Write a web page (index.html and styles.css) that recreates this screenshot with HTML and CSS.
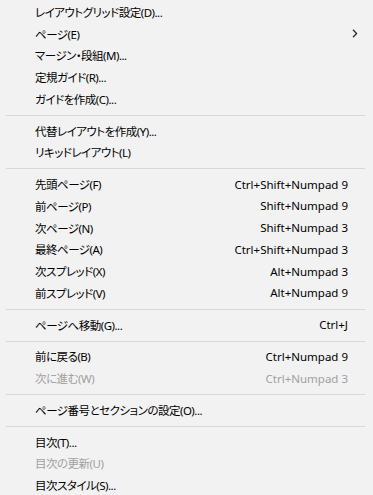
FILE: index.html
```html
<!DOCTYPE html>
<html lang="ja">
<head>
    <meta charset="UTF-8">
    <meta name="viewport" content="width=device-width, initial-scale=1.0">
    <title>レイアウトメニュー</title>
    <link rel="stylesheet" href="styles.css">
</head>
<body>
    <div class="menu">
        <div class="item"><span class="label">レイアウトグリッド設定(D)...</span></div>
        <div class="item"><span class="label">ページ(E)</span>
            <svg class="arrow" width="6" height="9" viewBox="0 0 6 9"><polyline points="1,0.8 4.6,4.5 1,8.2" fill="none" stroke="#2b2b2b" stroke-width="1.3"/></svg>
        </div>
        <div class="item"><span class="label">マージン・段組(M)...</span></div>
        <div class="item"><span class="label">定規ガイド(R)...</span></div>
        <div class="item"><span class="label">ガイドを作成(C)...</span></div>
        <div class="sep"></div>
        <div class="item"><span class="label">代替レイアウトを作成(Y)...</span></div>
        <div class="item"><span class="label">リキッドレイアウト(L)</span></div>
        <div class="sep"></div>
        <div class="item"><span class="label">先頭ページ(F)</span><span class="key">Ctrl+Shift+Numpad 9</span></div>
        <div class="item"><span class="label">前ページ(P)</span><span class="key">Shift+Numpad 9</span></div>
        <div class="item"><span class="label">次ページ(N)</span><span class="key">Shift+Numpad 3</span></div>
        <div class="item"><span class="label">最終ページ(A)</span><span class="key">Ctrl+Shift+Numpad 3</span></div>
        <div class="item"><span class="label">次スプレッド(X)</span><span class="key">Alt+Numpad 3</span></div>
        <div class="item"><span class="label">前スプレッド(V)</span><span class="key">Alt+Numpad 9</span></div>
        <div class="sep"></div>
        <div class="item"><span class="label">ページへ移動(G)...</span><span class="key">Ctrl+J</span></div>
        <div class="sep"></div>
        <div class="item"><span class="label">前に戻る(B)</span><span class="key">Ctrl+Numpad 9</span></div>
        <div class="item disabled"><span class="label">次に進む(W)</span><span class="key">Ctrl+Numpad 3</span></div>
        <div class="sep"></div>
        <div class="item"><span class="label">ページ番号とセクションの設定(O)...</span></div>
        <div class="sep"></div>
        <div class="item"><span class="label">目次(T)...</span></div>
        <div class="item disabled"><span class="label">目次の更新(U)</span></div>
        <div class="item"><span class="label">目次スタイル(S)...</span></div>
    </div>
</body>
</html>
```

FILE: styles.css
```css
body {
    margin: 0;
    background: #f2f2f2;
    font-family: "Noto Sans", "Noto Sans CJK JP", sans-serif;
    font-size: 12px;
    color: #000;
}
.menu {
    display: flex;
    flex-direction: column;
    padding-top: 1px;
}
.item {
    height: 21.75px;
    display: flex;
    align-items: center;
    justify-content: space-between;
    padding: 0 25px 0 35px;
    font-feature-settings: "palt";
    white-space: nowrap;
}
.label {
    font-size: 11.5px;
    letter-spacing: -0.5px;
}
.key {
    font-size: 11.5px;
}
.disabled {
    color: #a0a0a0;
}
.arrow {
    margin-right: -10px;
}
.sep {
    height: 1px;
    background: #d7d7d7;
    margin: 5px 8px 4px 6px;
}
```
